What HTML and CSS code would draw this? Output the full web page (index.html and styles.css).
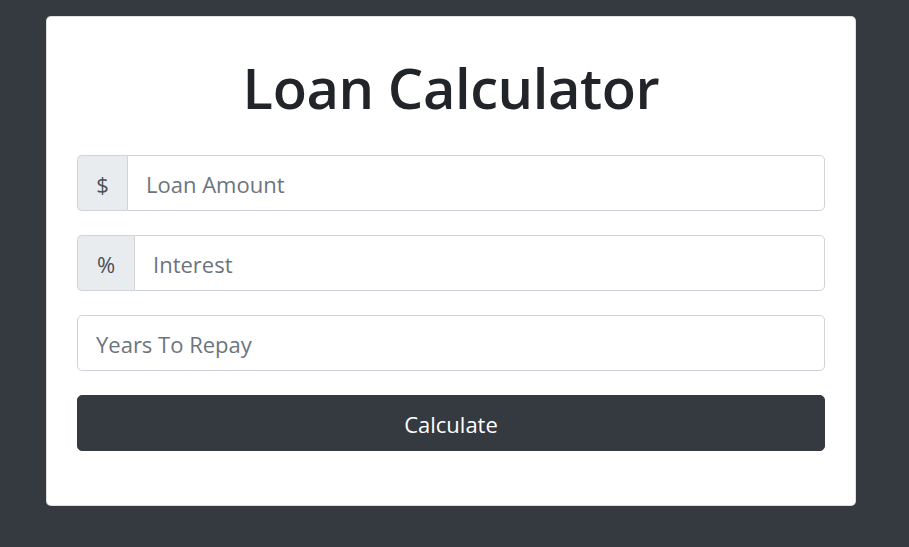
FILE: index.html
```html
<!DOCTYPE html>
<html lang="en">
<head>
<meta charset="utf-8">
<title>Loan Calculator</title>
<link rel="stylesheet" href="styles.css">
</head>
<body>
<div class="page">
  <div class="card">
    <h1 class="title">Loan Calculator</h1>
    <form class="form">
      <div class="group">
        <span class="addon addon-dollar">$</span>
        <input class="field" type="text" placeholder="Loan Amount">
      </div>
      <div class="group">
        <span class="addon addon-pct">%</span>
        <input class="field" type="text" placeholder="Interest">
      </div>
      <div class="group">
        <input class="field solo" type="text" placeholder="Years To Repay">
      </div>
      <button class="btn" type="button">Calculate</button>
    </form>
  </div>
</div>
</body>
</html>
```
FILE: styles.css
```css
* { box-sizing: border-box; }
html, body { margin: 0; height: 100%; }
body {
  background: #343a40;
  font-family: "Open Sans", "Noto Sans", sans-serif;
  color: #212529;
}
.page {
  padding: 16px 53px 0 46px;
}
.card {
  width: 810px;
  background: #fff;
  border: 1px solid rgba(0,0,0,.125);
  border-radius: 5px;
  padding: 30px 30px 54px;
}
.title {
  margin: 0 0 24px;
  height: 84px;
  line-height: 80px;
  text-align: center;
  font-size: 56px;
  font-weight: 600;
  letter-spacing: -0.4px;
  color: #212529;
}
.form { display: flex; flex-direction: column; gap: 24px; }
.group {
  display: flex;
  height: 56px;
}
.addon {
  display: flex;
  align-items: center;
  justify-content: center;
  padding-top: 2px;
  background: #e9ecef;
  border: 1px solid #ced4da;
  border-right: 0;
  border-radius: 5px 0 0 5px;
  color: #495057;
  font-size: 22px;
}
.addon-dollar { width: 50px; }
.addon-pct { width: 57px; }
.field {
  flex: 1;
  min-width: 0;
  height: 56px;
  border: 1px solid #ced4da;
  border-radius: 0 5px 5px 0;
  padding: 2px 18px 0;
  font-family: inherit;
  font-size: 22px;
  color: #495057;
  background: #fff;
  outline: none;
}
.field.solo { border-radius: 5px; }
.field::placeholder { color: #6c757d; opacity: 1; }
.btn {
  height: 56px;
  padding-top: 3px;
  border: 1px solid #343a40;
  border-radius: 5px;
  background: #343a40;
  color: #fff;
  font-family: inherit;
  font-size: 22px;
  cursor: pointer;
}
```
